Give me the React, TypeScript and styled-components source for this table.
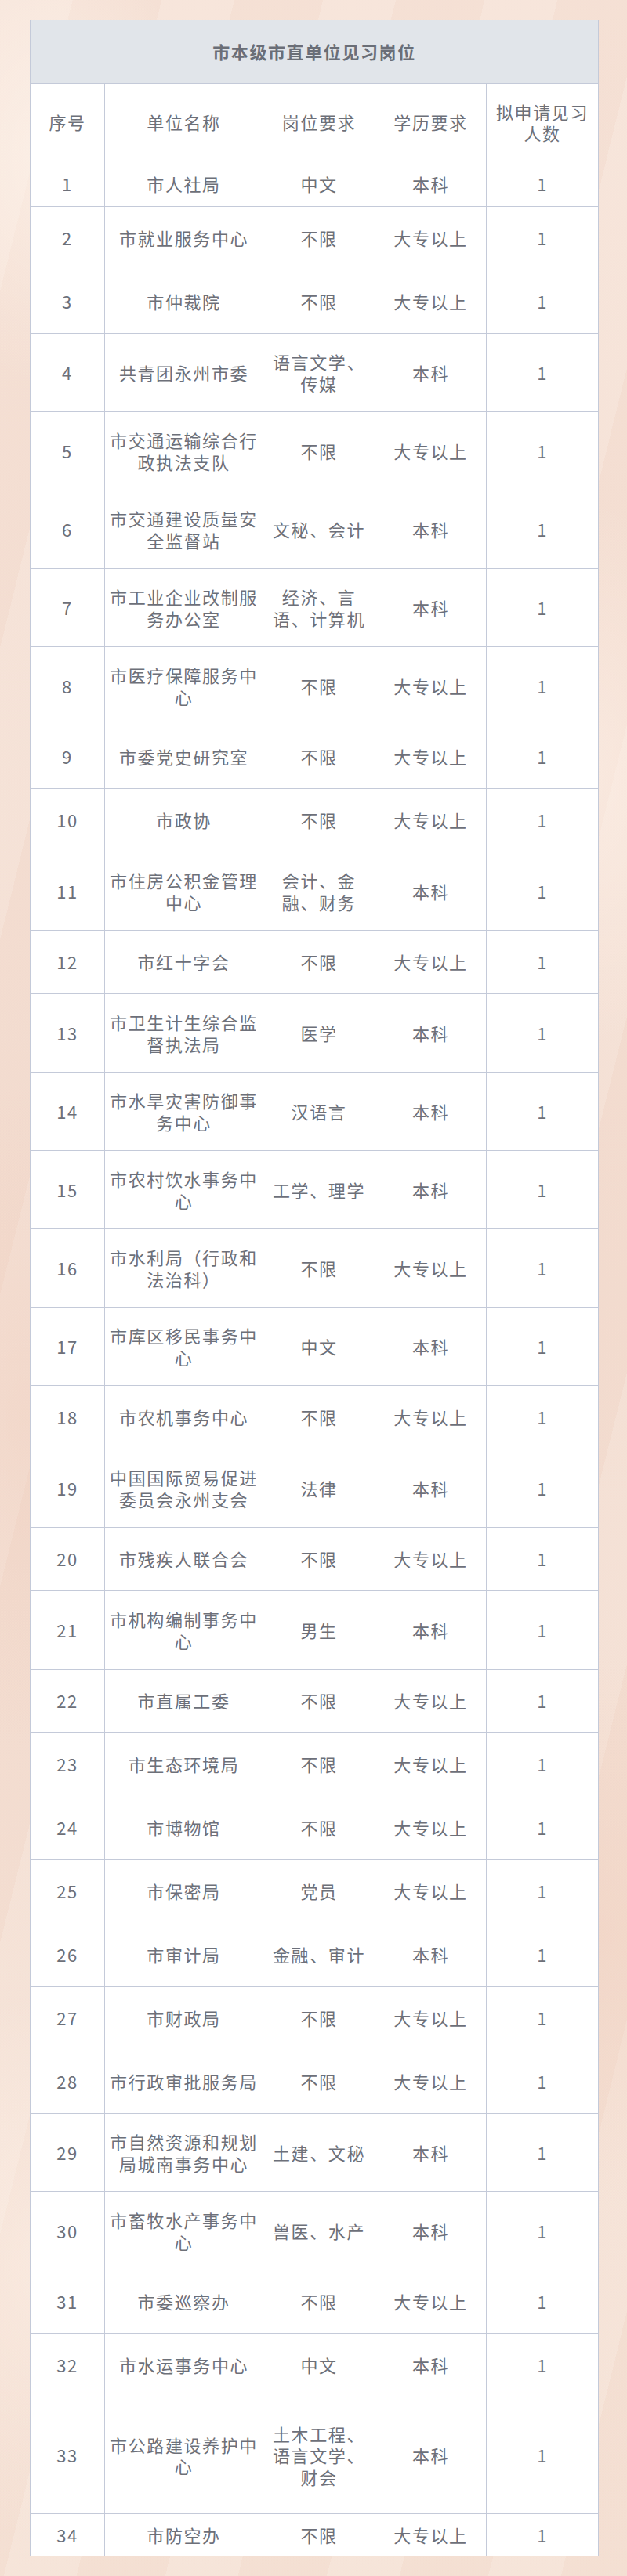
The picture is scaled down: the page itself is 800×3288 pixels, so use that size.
import React from "react";
import styled, { createGlobalStyle } from "styled-components";

const GlobalStyle = createGlobalStyle`
  html, body {
    margin: 0;
    padding: 0;
  }
  body {
    font-family: "Noto Sans CJK SC", "Noto Sans", sans-serif;
    background: #f4e0d4;
  }
`;

const Page = styled.div`
  min-height: 3288px;
  box-sizing: border-box;
  padding: 25px 37px 0 38px;
  background:
    radial-gradient(ellipse 260px 420px at 8% 6%, rgba(255, 246, 238, 0.6), transparent 70%),
    radial-gradient(ellipse 300px 500px at 92% 30%, rgba(255, 244, 236, 0.55), transparent 70%),
    radial-gradient(ellipse 280px 600px at 4% 55%, rgba(238, 200, 182, 0.35), transparent 70%),
    radial-gradient(ellipse 320px 500px at 96% 75%, rgba(240, 204, 186, 0.35), transparent 70%),
    radial-gradient(ellipse 260px 500px at 6% 88%, rgba(255, 244, 236, 0.5), transparent 70%),
    repeating-linear-gradient(
      104deg,
      rgba(255, 250, 245, 0.1) 0px,
      rgba(255, 250, 245, 0.1) 90px,
      rgba(232, 192, 172, 0.08) 90px,
      rgba(232, 192, 172, 0.08) 200px
    ),
    linear-gradient(180deg, #f6e3d8 0%, #f3ddd1 50%, #f5e2d6 100%);
`;

const Table = styled.table`
  width: 725px;
  border-collapse: collapse;
  table-layout: fixed;
  background: #ffffff;
  color: #6d7079;
  font-size: 22px;
  letter-spacing: 1.6px;
  line-height: 27.5px;
`;

const Col = styled.col<{ $w: number }>`
  width: ${(p) => p.$w}px;
`;

const Row = styled.tr<{ $h: number }>`
  height: ${(p) => p.$h}px;
`;

const TitleCell = styled.th`
  background: #e1e5ea;
  border: 1px solid #c4cad9;
  font-weight: 700;
  color: #6a6e77;
  text-align: center;
  vertical-align: middle;
  padding: 0 5px;
`;

const HeadCell = styled.th`
  border: 1px solid #c4cad9;
  font-weight: 400;
  text-align: center;
  vertical-align: middle;
  padding: 0 5px;
`;

const Cell = styled.td`
  border: 1px solid #c4cad9;
  text-align: center;
  vertical-align: middle;
  padding: 0 5px;
  word-break: normal;
`;

type Item = [string, string, string, string, number];

const rows: Item[] = [
  ["市人社局", "中文", "本科", "1", 58],
  ["市就业服务中心", "不限", "大专以上", "1", 81],
  ["市仲裁院", "不限", "大专以上", "1", 81],
  ["共青团永州市委", "语言文学、传媒", "本科", "1", 100],
  ["市交通运输综合行政执法支队", "不限", "大专以上", "1", 100],
  ["市交通建设质量安全监督站", "文秘、会计", "本科", "1", 100],
  ["市工业企业改制服务办公室", "经济、言语、计算机", "本科", "1", 100],
  ["市医疗保障服务中心", "不限", "大专以上", "1", 100],
  ["市委党史研究室", "不限", "大专以上", "1", 81],
  ["市政协", "不限", "大专以上", "1", 81],
  ["市住房公积金管理中心", "会计、金融、财务", "本科", "1", 100],
  ["市红十字会", "不限", "大专以上", "1", 81],
  ["市卫生计生综合监督执法局", "医学", "本科", "1", 100],
  ["市水旱灾害防御事务中心", "汉语言", "本科", "1", 100],
  ["市农村饮水事务中心", "工学、理学", "本科", "1", 100],
  ["市水利局（行政和法治科）", "不限", "大专以上", "1", 100],
  ["市库区移民事务中心", "中文", "本科", "1", 100],
  ["市农机事务中心", "不限", "大专以上", "1", 81],
  ["中国国际贸易促进委员会永州支会", "法律", "本科", "1", 100],
  ["市残疾人联合会", "不限", "大专以上", "1", 81],
  ["市机构编制事务中心", "男生", "本科", "1", 100],
  ["市直属工委", "不限", "大专以上", "1", 81],
  ["市生态环境局", "不限", "大专以上", "1", 81],
  ["市博物馆", "不限", "大专以上", "1", 81],
  ["市保密局", "党员", "大专以上", "1", 81],
  ["市审计局", "金融、审计", "本科", "1", 81],
  ["市财政局", "不限", "大专以上", "1", 81],
  ["市行政审批服务局", "不限", "大专以上", "1", 81],
  ["市自然资源和规划局城南事务中心", "土建、文秘", "本科", "1", 100],
  ["市畜牧水产事务中心", "兽医、水产", "本科", "1", 100],
  ["市委巡察办", "不限", "大专以上", "1", 81],
  ["市水运事务中心", "中文", "本科", "1", 81],
  ["市公路建设养护中心", "土木工程、语言文学、财会", "本科", "1", 149],
  ["市防空办", "不限", "大专以上", "1", 54],
];

export default function App() {
  return (
    <>
      <GlobalStyle />
      <Page>
        <Table>
          <colgroup>
            <Col $w={95} />
            <Col $w={202} />
            <Col $w={143} />
            <Col $w={142} />
            <Col $w={143} />
          </colgroup>
          <thead>
            <Row $h={81}>
              <TitleCell colSpan={5}>市本级市直单位见习岗位</TitleCell>
            </Row>
            <Row $h={99}>
              <HeadCell>序号</HeadCell>
              <HeadCell>单位名称</HeadCell>
              <HeadCell>岗位要求</HeadCell>
              <HeadCell>学历要求</HeadCell>
              <HeadCell>拟申请见习人数</HeadCell>
            </Row>
          </thead>
          <tbody>
            {rows.map(([name, req, edu, count, h], i) => (
              <Row key={i} $h={h}>
                <Cell>{i + 1}</Cell>
                <Cell>{name}</Cell>
                <Cell>{req}</Cell>
                <Cell>{edu}</Cell>
                <Cell>{count}</Cell>
              </Row>
            ))}
          </tbody>
        </Table>
      </Page>
    </>
  );
}
